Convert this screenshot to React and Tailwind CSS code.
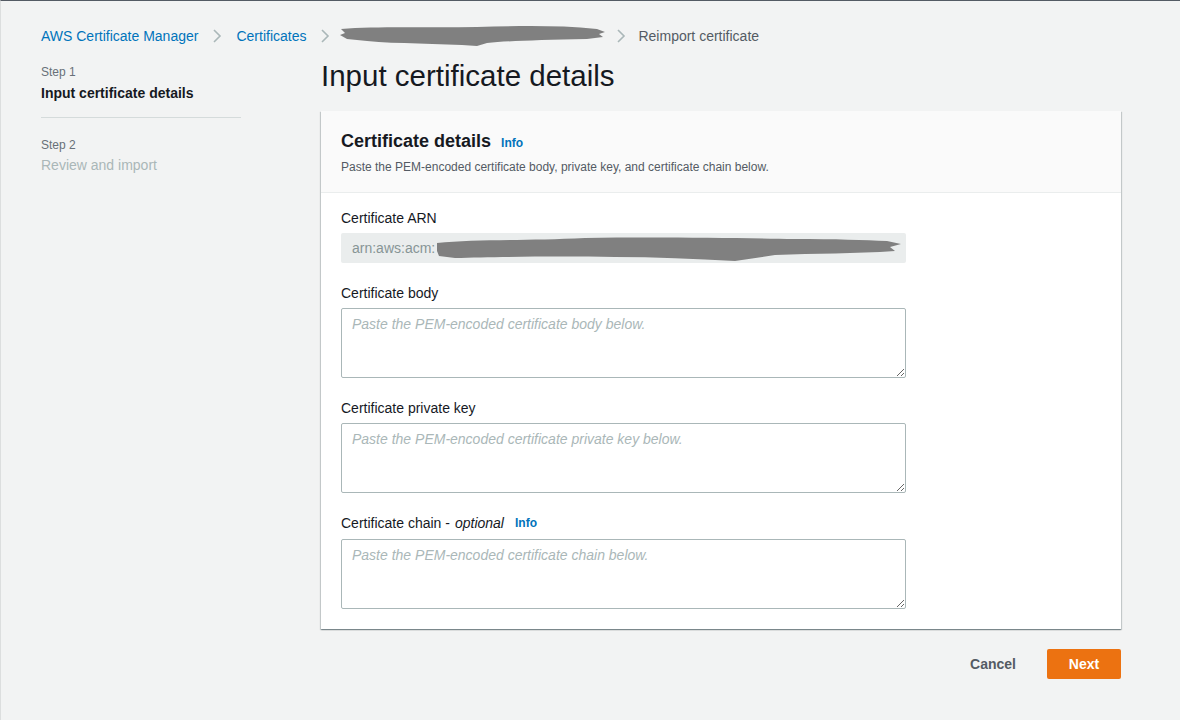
import React from "react";

function Chevron() {
  return (
    <svg width="10" height="16" viewBox="0 0 10 16" className="shrink-0">
      <polyline points="2,2 8,8 2,14" fill="none" stroke="#aab7b8" strokeWidth="1.6" />
    </svg>
  );
}

function BreadScribble() {
  return (
    <svg width="270" height="24" viewBox="0 0 270 24" className="shrink-0">
      <path
        d="M4 5 C40 2 90 4 140 3 C180 2 220 1 260 5 L268 8 L262 10 L266 13 L250 15 C200 16 170 17 150 19 L140 22 C100 19 60 20 30 17 L10 15 L3 11 L8 9 Z"
        fill="#808080"
      />
      <path d="M20 7 L60 6" stroke="#808080" strokeWidth="4" />
    </svg>
  );
}

function ArnScribble() {
  return (
    <svg width="470" height="28" viewBox="0 0 470 28" className="shrink-0">
      <path
        d="M2 8 C40 4 90 6 150 3 C220 2 300 3 360 4 C400 4 430 5 452 6 L466 9 L455 12 L460 16 C420 19 380 18 340 20 L300 26 C260 24 220 22 180 22 C120 21 60 22 20 23 L4 21 L2 16 Z"
        fill="#808080"
      />
    </svg>
  );
}

function Field({ label, placeholder, extra = "" }) {
  return (
    <div className="flex flex-col">
      <div className="h-[22px] text-[14px] leading-[22px] text-[#16191f] flex items-center">{label}</div>
      <textarea
        placeholder={placeholder}
        className={
          "h-[70px] w-[565px] rounded-[2px] border border-[#aab7b8] bg-white px-[10px] py-[4px] text-[14px] leading-[22px] text-[#16191f] outline-none placeholder:italic placeholder:text-[#aab7b8] " +
          extra
        }
        style={{ fontFamily: '"Liberation Sans", Arial, sans-serif' }}
      />
    </div>
  );
}

export default function App() {
  return (
    <div
      className="min-h-[720px] w-[1180px] bg-[#f2f3f3] border-t border-[#545b64] border-l border-l-[#dcdede] text-[#16191f]"
      style={{ fontFamily: '"Liberation Sans", Arial, sans-serif' }}
    >
      {/* Breadcrumbs */}
      <div className="flex items-center h-[22px] mt-[24px] pl-[40px] text-[14px] leading-[22px]">
        <span className="text-[#0073bb]">AWS Certificate Manager</span>
        <span className="ml-[14px] mr-[14px] flex items-center"><Chevron /></span>
        <span className="text-[#0073bb]">Certificates</span>
        <span className="ml-[14px] mr-[7px] flex items-center"><Chevron /></span>
        <BreadScribble />
        <span className="ml-[9px] mr-[12px] flex items-center"><Chevron /></span>
        <span className="text-[#545b64]">Reimport certificate</span>
      </div>

      <div className="flex pl-[40px] mt-[15px]">
        {/* Side nav */}
        <div className="w-[200px] shrink-0 pt-[2px]">
          <div className="text-[12px] leading-[16px] text-[#687078]">Step 1</div>
          <div className="mt-[3px] text-[14px] leading-[20px] font-bold text-[#16191f]">Input certificate details</div>
          <div className="mt-[14px] h-px bg-[#d5dbdb]" />
          <div className="mt-[19px] text-[12px] leading-[16px] text-[#687078]">Step 2</div>
          <div className="mt-[2px] text-[14px] leading-[20px] text-[#aab7b8]">Review and import</div>
        </div>

        {/* Main */}
        <div className="ml-[80px] w-[800px] flex flex-col">
          <h1 className="text-[29.5px] leading-[36px] text-[#16191f] font-normal h-[36px] mt-[-4px]">
            Input certificate details
          </h1>

          <div className="mt-[17px] bg-white shadow-[0_1px_1px_0_rgba(0,28,36,0.3),1px_1px_1px_0_rgba(0,28,36,0.15),-1px_1px_1px_0_rgba(0,28,36,0.15)]">
            <div className="bg-[#fafafa] border-b border-[#eaeded] px-[20px] pt-[19px] pb-[17px]">
              <div className="flex items-baseline">
                <span className="text-[18px] leading-[22px] font-bold text-[#16191f]">Certificate details</span>
                <span className="ml-[10px] text-[12px] font-bold text-[#0073bb]">Info</span>
              </div>
              <div className="mt-[7px] text-[12px] leading-[16px] text-[#545b64]">
                Paste the PEM-encoded certificate body, private key, and certificate chain below.
              </div>
            </div>

            <div className="px-[20px] pt-[14px] pb-[20px] flex flex-col gap-[19px]">
              <div className="flex flex-col">
                <div className="h-[22px] text-[14px] leading-[22px]">Certificate ARN</div>
                <div className="mt-[4px] h-[30px] w-[565px] rounded-[2px] bg-[#eaeded] flex items-center pl-[11px] overflow-hidden">
                  <span className="text-[14px] text-[#879596]">arn:aws:acm:</span>
                  <span className="ml-[0px] mt-[2px]"><ArnScribble /></span>
                </div>
              </div>
              <Field label="Certificate body" placeholder="Paste the PEM-encoded certificate body below." extra="mt-[4px]" />
              <Field label="Certificate private key" placeholder="Paste the PEM-encoded certificate private key below." extra="mt-[4px]" />
              <Field
                label={
                  <>
                    <span>Certificate chain -</span>
                    <span className="italic ml-[5px]">optional</span>
                    <span className="ml-[11px] text-[12px] font-bold text-[#0073bb]">Info</span>
                  </>
                }
                placeholder="Paste the PEM-encoded certificate chain below."
                extra="mt-[5px]"
              />
            </div>
          </div>

          <div className="mt-[20px] flex justify-end items-center">
            <button className="h-[30px] px-[20px] text-[14px] font-bold text-[#545b64]">Cancel</button>
            <button className="ml-[11px] h-[30px] w-[74px] rounded-[2px] bg-[#ec7211] text-[14px] font-bold text-white">
              Next
            </button>
          </div>
        </div>
      </div>
    </div>
  );
}
